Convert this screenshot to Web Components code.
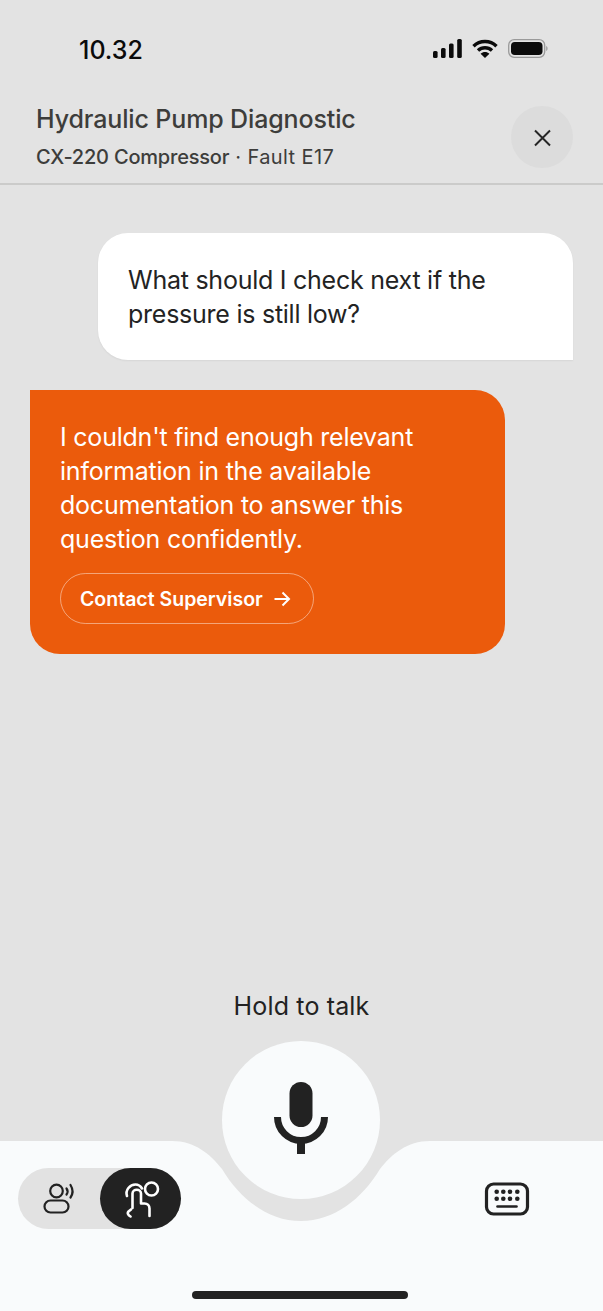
<!DOCTYPE html>
<html lang="en">
<head>
<meta charset="utf-8">
<title>Hydraulic Pump Diagnostic</title>
<style>
  html, body { margin: 0; padding: 0; }
  body { font-family: Inter, "Liberation Sans", sans-serif; background: #e3e3e3; }
</style>
</head>
<body>
<diag-screen>
  <status-bar slot="status"></status-bar>
  <diag-header slot="header" title="Hydraulic Pump Diagnostic" machine="CX-220 Compressor" fault="Fault E17"></diag-header>
  <chat-bubble from="user">What should I check next if the pressure is still low?</chat-bubble>
  <chat-bubble from="bot">I couldn't find enough relevant information in the available documentation to answer this question confidently.
    <contact-button slot="action">Contact Supervisor</contact-button>
  </chat-bubble>
  <talk-dock slot="dock"></talk-dock>
</diag-screen>

<script>
  function shadow(el, html) {
    el.attachShadow({ mode: "open" }).innerHTML = html;
  }

  customElements.define("diag-screen", class extends HTMLElement {
    connectedCallback() {
      shadow(this, `
        <style>
          :host { display: flex; flex-direction: column; width: 603px; height: 1311px; overflow: hidden; background: #e3e3e3; }
          .chat { flex: 1; display: flex; flex-direction: column; gap: 30px; padding: 48px 30px 0; min-height: 0; }
        </style>
        <slot name="status"></slot>
        <slot name="header"></slot>
        <div class="chat"><slot></slot></div>
        <slot name="dock"></slot>`);
    }
  });

  customElements.define("status-bar", class extends HTMLElement {
    connectedCallback() {
      shadow(this, `
        <style>
          :host { display: flex; justify-content: space-between; align-items: flex-start; height: 103px; padding: 36px 55px 0 79px; box-sizing: border-box; color: #0b0b0b; }
          .time { font-size: 25px; font-weight: 500; line-height: 28px; }
          .icons { display: flex; align-items: center; gap: 10px; padding-top: 3px; }
          svg { display: block; }
        </style>
        <span class="time">10.32</span>
        <div class="icons">
          <svg width="29" height="19" viewBox="0 0 29 19" fill="currentColor">
            <rect x="0" y="12" width="4.600" height="7" rx="1.500"/>
            <rect x="8" y="9" width="4.600" height="10" rx="1.500"/>
            <rect x="16" y="4.500" width="4.600" height="14.500" rx="1.500"/>
            <rect x="24.200" y="0" width="4.600" height="19" rx="1.500"/>
          </svg>
          <svg width="26" height="19" viewBox="0 0 26 19" fill="none" stroke="currentColor" stroke-width="3.400">
            <path d="M1.500 7.200C7.800 1 18.200 1 24.500 7.200"/>
            <path d="M6 11.600C10 7.800 16 7.800 20 11.600"/>
            <path d="M13 19L8.600 14.700C11.200 12.400 14.800 12.400 17.400 14.700Z" fill="currentColor" stroke="none"/>
          </svg>
          <svg width="40" height="19" viewBox="0 0 40 19" fill="currentColor">
            <rect x="0.700" y="0.700" width="36" height="17.600" rx="5.500" fill="none" stroke="#9a9a9a" stroke-width="1.300"/>
            <rect x="3" y="3" width="31.500" height="13" rx="3.800"/>
            <path d="M38 7C39.300 7.500 39.700 8.500 39.700 9.500S39.300 11.500 38 12Z" fill="#a8a8a8"/>
          </svg>
        </div>`);
    }
  });

  customElements.define("diag-header", class extends HTMLElement {
    connectedCallback() {
      shadow(this, `
        <style>
          :host { display: flex; justify-content: space-between; align-items: flex-start; height: 82px; padding: 0 30px 0 36px; box-sizing: border-box; border-bottom: 2px solid #cbcbca; color: #3d3d3b; }
          h1 { margin: 0; font-size: 25px; line-height: 32px; font-weight: 500; letter-spacing: -0.13px; }
          p { margin: 10px 0 0; font-size: 20px; line-height: 24px; letter-spacing: 0.4px; }
          b { font-weight: 500; letter-spacing: -0.2px; }
          button { all: unset; display: flex; align-items: center; justify-content: center; width: 62px; height: 62px; margin-top: 3px; border-radius: 50%; background: #dcdcdc; }
        </style>
        <div>
          <h1>${this.getAttribute("title")}</h1>
          <p><b>${this.getAttribute("machine")}</b> · ${this.getAttribute("fault")}</p>
        </div>
        <button aria-label="Close">
          <svg width="22" height="22" viewBox="0 0 22 22" fill="none" stroke="#262626" stroke-width="2">
            <path d="M4 4.500L19 19.500M19 4.500L4 19.500"/>
          </svg>
        </button>`);
    }
  });

  customElements.define("chat-bubble", class extends HTMLElement {
    connectedCallback() {
      shadow(this, `
        <style>
          :host { display: block; width: 475px; box-sizing: border-box; padding: 30px; font-size: 25px; line-height: 34px; letter-spacing: -0.25px; }
          :host([from="user"]) { align-self: flex-end; background: #fff; color: #232323; border-radius: 30px 30px 0 30px; padding-bottom: 29px; box-shadow: 0 1px 2px rgba(0,0,0,.06); }
          :host([from="bot"]) { align-self: flex-start; background: #eb5b0c; color: #fff; border-radius: 0 30px 30px 30px; letter-spacing: -0.22px; }
          ::slotted([slot="action"]) { margin-top: 17px; }
        </style>
        <slot></slot>
        <slot name="action"></slot>`);
    }
  });

  customElements.define("contact-button", class extends HTMLElement {
    connectedCallback() {
      shadow(this, `
        <style>
          :host { display: flex; align-items: center; gap: 10px; width: fit-content; height: 51px; box-sizing: border-box; padding: 0 22px 0 19px; border: 1px solid rgba(255,255,255,.45); border-radius: 26px; font-size: 19.500px; font-weight: 600; letter-spacing: 0; color: #fff; }
          svg { display: block; }
        </style>
        <slot></slot>
        <svg width="18" height="18" viewBox="0 0 18 18" fill="none" stroke="#fff" stroke-width="2">
          <path d="M1.500 9H16M9.500 2.500L16 9L9.500 15.500"/>
        </svg>`);
    }
  });

  customElements.define("talk-dock", class extends HTMLElement {
    connectedCallback() {
      shadow(this, `
        <style>
          :host { display: block; color: #222; }
          .hold { margin-bottom: 119px; text-align: center; font-size: 25px; line-height: 32px; letter-spacing: 0.15px; }
          .bar { position: relative; height: 170px; }
          .bg { position: absolute; inset: 0; display: block; }
          .mic { position: absolute; left: 222px; top: -100px; width: 158px; height: 158px; border-radius: 50%; background: #f9fbfc; display: flex; align-items: center; justify-content: center; }
          .mic svg { margin-bottom: 4px; }
          .row { position: relative; display: flex; justify-content: space-between; align-items: center; padding: 27px 73px 0 18px; }
          .toggle { display: flex; height: 61px; width: 163px; border-radius: 31px; background: #e2e2e2; justify-content: space-between; }
          .toggle span { width: 81px; display: flex; align-items: center; justify-content: center; border-radius: 31px; }
          .toggle .on { background: #222; color: #fff; }
          .home { position: absolute; left: 192px; bottom: 12px; width: 216px; height: 8px; border-radius: 4px; background: #222; }
        </style>
        <div class="hold">Hold to talk</div>
        <div class="bar">
          <svg class="bg" width="603" height="170" viewBox="0 0 603 170">
            <path fill="#f9fbfc" d="M0 0H172C195 0 210 13 222 28C240 58 268 80 301 80C334 80 362 58 380 28C392 13 407 0 430 0H603V170H0Z"/>
          </svg>
          <div class="mic">
            <svg width="54" height="72" viewBox="0 0 54 72" fill="#222">
              <rect x="15.500" y="0" width="23" height="45" rx="11.500"/>
              <path d="M3.500 35A23.500 23.500 0 0 0 50.500 35" fill="none" stroke="#222" stroke-width="7"/>
              <rect x="23" y="56" width="8" height="16"/>
            </svg>
          </div>
          <div class="row">
            <div class="toggle">
              <span>
                <svg width="34" height="34" viewBox="0 0 34 34" fill="none" stroke="currentColor" stroke-width="2.200" stroke-linecap="round">
                  <circle cx="14.500" cy="9" r="6.300"/>
                  <rect x="2.500" y="18.500" width="24" height="12" rx="6"/>
                  <path d="M24.500 6.500C26 8.500 26 10.500 24.500 12.500M28.500 3C31 7 31 12 28.500 15.500"/>
                </svg>
              </span>
              <span class="on">
                <svg width="38" height="38" viewBox="0 0 38 38" fill="none" stroke="currentColor" stroke-width="2.600" stroke-linecap="round" stroke-linejoin="round">
                  <circle cx="29.500" cy="9" r="6.500"/>
                  <path d="M5 16C3 10 8 4.500 13.500 4.500C16 4.500 18.500 6 20 8.500"/>
                  <path d="M10.500 28V13.500C10.500 8.500 19 8.500 19 13.500V23.500H22.500C25.500 23.500 27.500 25.500 27.500 28.500V36"/>
                  <path d="M9 29.500L6.500 31.500C5 33 6 35 8.500 36.500"/>
                </svg>
              </span>
            </div>
            <svg width="46" height="34" viewBox="0 0 46 34" fill="none" stroke="currentColor">
              <rect x="2.500" y="2" width="41" height="30" rx="7" stroke-width="3.200"/>
              <g fill="currentColor" stroke="none">
                <circle cx="12.700" cy="9.800" r="2.300"/><circle cx="19.300" cy="9.800" r="2.300"/><circle cx="26" cy="9.800" r="2.300"/><circle cx="33.300" cy="9.800" r="2.300"/>
                <circle cx="12.700" cy="16.800" r="2.300"/><circle cx="19.300" cy="16.800" r="2.300"/><circle cx="26" cy="16.800" r="2.300"/><circle cx="33.300" cy="16.800" r="2.300"/>
              </g>
              <path d="M13.500 24.500H32.500" stroke-width="2.600" stroke-linecap="round"/>
            </svg>
          </div>
          <div class="home"></div>
        </div>`);
    }
  });
</script>
</body>
</html>
